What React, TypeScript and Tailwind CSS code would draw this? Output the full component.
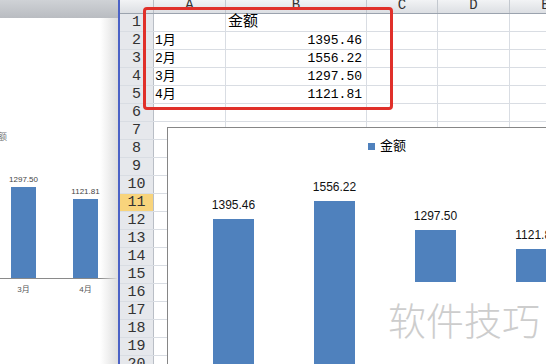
import React from 'react'

const mono = "font-['Liberation_Mono','Noto_Sans_CJK_SC',monospace]"

// column widths incl. right border
const cols = [
  { key: 'A', w: 'w-[72px]' },
  { key: 'B', w: 'w-[141px]' },
  { key: 'C', w: 'w-[71px]' },
  { key: 'D', w: 'w-[72px]' },
  { key: 'E', w: 'w-[72px]' },
]

const data: Record<number, { a?: string; b?: string }> = {
  1: { b: '金额' },
  2: { a: '1月', b: '1395.46' },
  3: { a: '2月', b: '1556.22' },
  4: { a: '3月', b: '1297.50' },
  5: { a: '4月', b: '1121.81' },
}

const bars = [
  { label: '1395.46', mt: 'mt-[34px]', h: 'h-[200px]' },
  { label: '1556.22', mt: 'mt-[16px]', h: 'h-[220px]' },
  { label: '1297.50', mt: 'mt-[45px]', h: 'h-[52px]' },
  { label: '1121.81', mt: 'mt-[64px]', h: 'h-[33px]' },
]

const BackWindow = () => (
  <div className="relative w-[120px] h-full shrink-0 flex flex-col bg-white border-r-2 border-[#4b62c6] overflow-hidden">
    <div className="h-[18px] shrink-0 bg-linear-to-b from-[#cfd2d6] to-[#b9bcc1]" />
    <div className="flex flex-col font-['Liberation_Sans','Noto_Sans_CJK_SC',sans-serif]">
      <div className="mt-[113px] h-[12px] -ml-[11px] text-[9px] leading-[12px] text-[#777]">金额</div>
      <div className="h-[135px] flex items-end pl-[11px] gap-[37px]">
        <div className="w-[25px] flex flex-col items-center">
          <span className="text-[8px] leading-[10px] text-[#444] whitespace-nowrap mb-[2px]">1297.50</span>
          <div className="w-[25px] h-[91px] bg-[#4f81bd]" />
        </div>
        <div className="w-[25px] flex flex-col items-center">
          <span className="text-[8px] leading-[10px] text-[#444] whitespace-nowrap mb-[2px]">1121.81</span>
          <div className="w-[25px] h-[79px] bg-[#4f81bd]" />
        </div>
      </div>
      <div className="h-px w-[117px] bg-[#8a8a8a]" />
      <div className="flex pl-[11px] gap-[37px] mt-[5px]">
        <span className="w-[25px] text-center text-[8px] text-[#555]">3月</span>
        <span className="w-[25px] text-center text-[8px] text-[#555]">4月</span>
      </div>
    </div>
    {/* shade at the edge */}
    <div className="absolute right-0 top-[18px] bottom-0 w-[18px] bg-linear-to-r from-transparent to-[#dedede]" />
  </div>
)

const Sheet = () => {
  const rows = Array.from({ length: 20 }, (_, i) => i + 1)
  return (
    <div className={`relative flex-1 h-full overflow-hidden bg-white ${mono}`}>
      {/* column header */}
      <div className="flex h-[14px] border-b border-[#9ba3ae] bg-linear-to-b from-[#f2f3f5] to-[#dcdfe3] text-[14px] leading-[11px] text-[#333]">
        <div className="w-[34px] shrink-0 border-r border-[#b9bec6]" />
        {cols.map((c) => (
          <div key={c.key} className={`${c.w} shrink-0 border-r border-[#c3c8cf] text-center`}>
            {c.key}
          </div>
        ))}
      </div>
      {rows.map((r) => (
        <div key={r} className="flex h-[18px] border-b border-[#d9dde3]">
          <div
            className={`w-[34px] shrink-0 border-r border-[#b9bec6] text-center text-[15px] leading-[18px] text-[#333] ${
              r === 11 ? 'bg-[#f8d47c]' : 'bg-[#e6e8ec]'
            }`}
          >
            {r}
          </div>
          <div className="w-[72px] shrink-0 border-r border-[#d9dde3] pl-[1px] text-[13px] leading-[18px] text-black">
            {data[r]?.a}
          </div>
          <div
            className={`w-[141px] shrink-0 border-r border-[#d9dde3] leading-[18px] text-black ${
              r === 1 ? 'pl-[2px] text-[15px]' : 'pr-[4px] text-right text-[13px]'
            }`}
          >
            {data[r]?.b}
          </div>
          <div className="w-[71px] shrink-0 border-r border-[#d9dde3]" />
          <div className="w-[72px] shrink-0 border-r border-[#d9dde3]" />
          <div className="w-[72px] shrink-0 border-r border-[#d9dde3]" />
        </div>
      ))}

      {/* red highlight around the table */}
      <div className="absolute left-[23px] top-[7px] w-[250px] h-[103px] border-[3px] border-[#e0302a] rounded-[4px]" />

      {/* embedded chart */}
      <div className="absolute left-[47px] top-[127px] w-[420px] h-[260px] border border-[#868686] bg-white flex flex-col overflow-hidden font-['Liberation_Sans','Noto_Sans_CJK_SC',sans-serif]">
        <div className="h-[36px] shrink-0 flex items-center pl-[200px] gap-[5px]">
          <span className="w-[7px] h-[7px] bg-[#4f81bd]" />
          <span className="text-[13px] text-black">金额</span>
        </div>
        <div className="shrink-0 flex items-start pl-[45px] gap-[60px]">
          {bars.map((b) => (
            <div key={b.label} className={`w-[41px] shrink-0 flex flex-col items-center ${b.mt}`}>
              <span className="h-[14px] text-[12px] leading-[14px] text-[#111] whitespace-nowrap mb-[7px]">
                {b.label}
              </span>
              <div className={`w-[41px] ${b.h} bg-[#4f81bd]`} />
            </div>
          ))}
        </div>
      </div>
    </div>
  )
}

export default function App() {
  return (
    <div className="relative w-[546px] h-[364px] overflow-hidden flex bg-white">
      <BackWindow />
      <Sheet />
      <div className="absolute left-[388px] top-[300px] text-[38px] leading-none font-light text-[#cdcdcd] font-['Noto_Sans_CJK_SC',sans-serif] whitespace-nowrap">
        软件技巧
      </div>
    </div>
  )
}
